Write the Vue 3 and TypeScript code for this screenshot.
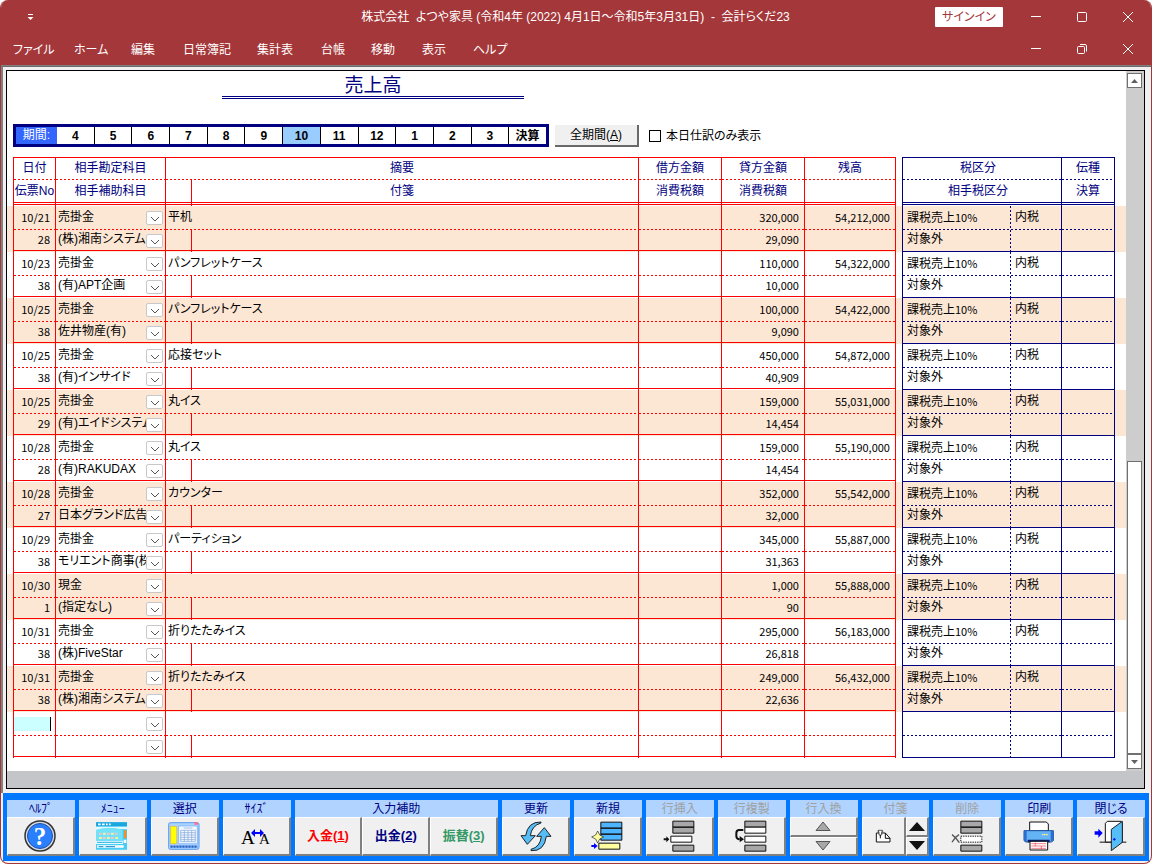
<script setup lang="ts">
import { ref } from 'vue'

interface Entry {
  date: string
  no: string
  account: string
  sub: string
  memo: string
  credit: string
  tax: string
  balance: string
}

const menus = ['ファイル', 'ホーム', '編集', '日常簿記', '集計表', '台帳', '移動', '表示', 'ヘルプ']
const months = ['4', '5', '6', '7', '8', '9', '10', '11', '12', '1', '2', '3', '決算']
const month = ref('10')
const todayOnly = ref(false)
const newDate = ref('')

const raw: string[][] = [
  ['10/21', '28', '売掛金', '(株)湘南システム', '平机', '320,000', '29,090', '54,212,000'],
  ['10/23', '38', '売掛金', '(有)APT企画', 'パンフレットケース', '110,000', '10,000', '54,322,000'],
  ['10/25', '38', '売掛金', '佐井物産(有)', 'パンフレットケース', '100,000', '9,090', '54,422,000'],
  ['10/25', '38', '売掛金', '(有)インサイド', '応接セット', '450,000', '40,909', '54,872,000'],
  ['10/25', '29', '売掛金', '(有)エイドシステム', '丸イス', '159,000', '14,454', '55,031,000'],
  ['10/28', '28', '売掛金', '(有)RAKUDAX', '丸イス', '159,000', '14,454', '55,190,000'],
  ['10/28', '27', '売掛金', '日本グランド広告', 'カウンター', '352,000', '32,000', '55,542,000'],
  ['10/29', '38', '売掛金', 'モリエント商事(株)', 'パーティション', '345,000', '31,363', '55,887,000'],
  ['10/30', '1', '現金', '(指定なし)', '', '1,000', '90', '55,888,000'],
  ['10/31', '38', '売掛金', '(株)FiveStar', '折りたたみイス', '295,000', '26,818', '56,183,000'],
  ['10/31', '38', '売掛金', '(株)湘南システム', '折りたたみイス', '249,000', '22,636', '56,432,000'],
  ['', '', '', '', '', '', '', ''],
]
const entries: Entry[] = raw.map(([date, no, account, sub, memo, credit, tax, balance]) => ({
  date, no, account, sub, memo, credit, tax, balance,
}))
</script>

<template>
  <div class="window">
    <header class="caption">
      <div class="title-row">
        <button class="quick" aria-label="クイックアクセス">
          <svg width="7" height="8" viewBox="0 0 7 8"><path d="M1 1.5h5" stroke="#fff" /><path d="M0.5 4h6l-3 3z" fill="#fff" /></svg>
        </button>
        <h1>株式会社&nbsp; よつや家具 (令和4年 (2022) 4月1日～令和5年3月31日)&nbsp; -&nbsp; 会計らくだ23</h1>
        <button class="signin">サインイン</button>
        <div class="controls">
          <button aria-label="最小化"><svg width="12" height="12"><path d="M1 5.5h10" stroke="#fff" /></svg></button>
          <button aria-label="最大化"><svg width="12" height="12"><rect x="1.5" y="1.5" width="9" height="9" rx="1" fill="none" stroke="#fff" /></svg></button>
          <button aria-label="閉じる"><svg width="12" height="12"><path d="M1 1l10 10M11 1L1 11" stroke="#fff" /></svg></button>
        </div>
      </div>
      <div class="menu-row">
        <nav>
          <button v-for="m in menus" :key="m">{{ m }}</button>
        </nav>
        <div class="controls">
          <button aria-label="文書を最小化"><svg width="12" height="12"><path d="M1 5.5h10" stroke="#fff" /></svg></button>
          <button aria-label="文書を元に戻す">
            <svg width="12" height="12"><rect x="1.5" y="3.5" width="7" height="7" rx="1" fill="none" stroke="#fff" /><path d="M4 1.5h5q1.500 0 1.500 1.500v5.500" fill="none" stroke="#fff" /></svg>
          </button>
          <button aria-label="文書を閉じる"><svg width="12" height="12"><path d="M1 1l10 10M11 1L1 11" stroke="#fff" /></svg></button>
        </div>
      </div>
    </header>

    <main class="client">
      <div class="frame">
        <div class="pane">
          <div class="sheet">
            <h2>売上高</h2>
            <div class="filters">
              <div class="period">
                <span class="period-label">期間:</span>
                <button v-for="m in months" :key="m" :class="{ on: month === m }" @click="month = m">{{ m }}</button>
              </div>
              <button class="all">全期間(<u>A</u>)</button>
              <label class="today"><input v-model="todayOnly" type="checkbox" />本日仕訳のみ表示</label>
            </div>

            <div class="ledgers">
              <table class="ledger red">
                <colgroup>
                  <col class="c-date" /><col class="c-acct" /><col class="c-tag" /><col /><col class="c-amt" /><col class="c-amt" /><col class="c-bal" />
                </colgroup>
                <thead>
                  <tr class="top">
                    <th>日付</th><th>相手勘定科目</th><th colspan="2">摘要</th><th>借方金額</th><th>貸方金額</th><th>残高</th>
                  </tr>
                  <tr class="bottom">
                    <th>伝票No</th><th>相手補助科目</th><th></th><th class="memo-head">付箋</th><th>消費税額</th><th>消費税額</th><th></th>
                  </tr>
                </thead>
                <tbody v-for="(e, i) in entries" :key="i">
                  <tr class="top">
                    <td v-if="e.date" class="num">{{ e.date }}</td>
                    <td v-else class="entry"><input v-model="newDate" aria-label="日付" /></td>
                    <td class="pick">
                      <div class="combo">
                        <select aria-label="相手勘定科目"><option>{{ e.account }}</option></select>
                        <span class="arrow"><svg width="10" height="6" viewBox="0 0 10 6"><path d="M1 1l4 4 4-4" fill="none" stroke="#555" /></svg></span>
                      </div>
                    </td>
                    <td colspan="2" class="memo">{{ e.memo }}</td>
                    <td class="num"></td>
                    <td class="num">{{ e.credit }}</td>
                    <td class="num">{{ e.balance }}</td>
                  </tr>
                  <tr class="bottom">
                    <td class="num">{{ e.no }}</td>
                    <td class="pick">
                      <div class="combo">
                        <select aria-label="相手補助科目"><option>{{ e.sub }}</option></select>
                        <span class="arrow"><svg width="10" height="6" viewBox="0 0 10 6"><path d="M1 1l4 4 4-4" fill="none" stroke="#555" /></svg></span>
                      </div>
                    </td>
                    <td></td>
                    <td></td>
                    <td class="num"></td>
                    <td class="num">{{ e.tax }}</td>
                    <td class="num"></td>
                  </tr>
                </tbody>
              </table>

              <table class="ledger navy">
                <colgroup><col class="c-kind" /><col class="c-in" /><col class="c-end" /></colgroup>
                <thead>
                  <tr class="top"><th colspan="2" class="kind-head">税区分</th><th>伝種</th></tr>
                  <tr class="bottom"><th colspan="2" class="kind-head">相手税区分</th><th>決算</th></tr>
                </thead>
                <tbody v-for="(e, i) in entries" :key="i">
                  <tr class="top">
                    <td class="kind"><template v-if="e.date">課税売上<span class="rate">10%</span></template></td>
                    <td class="in">{{ e.date ? '内税' : '' }}</td>
                    <td></td>
                  </tr>
                  <tr class="bottom">
                    <td class="kind">{{ e.date ? '対象外' : '' }}</td>
                    <td class="in"></td>
                    <td></td>
                  </tr>
                </tbody>
              </table>
            </div>
          </div>
          <div class="scroll">
            <button aria-label="上へ"><svg width="7" height="4"><path d="M0 4L3.500 0 7 4z" fill="#606060" /></svg></button>
            <div class="track"><div class="thumb"></div></div>
            <button aria-label="下へ"><svg width="7" height="4"><path d="M0 0h7L3.500 4z" fill="#606060" /></svg></button>
          </div>
        </div>
        <div class="strip"></div>
      </div>
    </main>

    <footer class="tools">
      <section>
        <h3 class="half">ﾍﾙﾌﾟ</h3>
        <div class="keys"><button aria-label="ヘルプ">
          <svg width="32" height="32" viewBox="0 0 32 32">
            <circle cx="16" cy="16" r="15" fill="#d8dce4" stroke="#333" stroke-width="1.500" />
            <circle cx="16" cy="16" r="12.500" fill="#2a7fff" stroke="#1c50a8" />
            <text x="16" y="25" text-anchor="middle" class="q">?</text>
          </svg>
        </button></div>
      </section>
      <section>
        <h3 class="half">ﾒﾆｭｰ</h3>
        <div class="keys"><button aria-label="メニュー">
          <svg width="32" height="28" viewBox="291 97 96 84">
            <path d="M291 98h93v82h-93z" fill="#45cdf5" />
            <path d="M291 98h93v12h-93z" fill="#1ba6e0" />
            <path d="M297 104h8M309 104h8M321 104h5M330 104h5" stroke="#fff" stroke-width="5" />
            <path d="M291 111h93v8q-40-4-60 0t-33 6z" fill="#e4f9ff" />
            <path d="M291 120q40-12 80 0v32h-80z" fill="#73e1f8" />
            <path d="M300 132h8M324 132h8M347 132h8M312 145h8M336 145h8" stroke="#ffc1c8" stroke-width="6" />
            <path d="M312 132h8M336 132h8M300 145h8M324 145h8M349 145h8" stroke="#eef79b" stroke-width="6" />
            <path d="M291 153h81v10h-81z" fill="#e8fbff" />
            <path d="M294 158h76" stroke="#26b4df" stroke-width="3" />
            <path d="M375 122h7v24h-7z" fill="#ff8a1c" />
            <path d="M374 150h8v10h-8zM294 167h80v7h-80z" fill="#fff" />
            <path d="M299 171h14M320 171h28" stroke="#1488c8" stroke-width="3" />
          </svg>
        </button></div>
      </section>
      <section>
        <h3>選択</h3>
        <div class="keys"><button aria-label="選択">
          <svg width="32" height="28" viewBox="503 95 96 84">
            <rect x="505" y="97" width="91" height="80" rx="5" fill="#a9d3ff" stroke="#5b9bf0" stroke-width="3" />
            <path d="M582 96h11v7h-11z" fill="#ff6f8f" />
            <path d="M511 108h18v52h-18z" fill="#ff0" stroke="#e9ad43" stroke-width="2" />
            <path d="M535 107h56v53h-56z" fill="#f4f9ff" stroke="#6aaaf2" stroke-width="2" />
            <path d="M541 120h44v34h-44zM541 127h44M541 134h44M541 141h44M541 148h44M552 120v34M563 120v34M574 120v34M550 113h26" fill="none" stroke="#7ba5d6" stroke-width="2" />
            <path d="M507 164h87v9h-87z" fill="#a9d3ff" />
            <path d="M510 169h82" stroke="#2a62c4" stroke-width="7" stroke-dasharray="7 2" />
          </svg>
        </button></div>
      </section>
      <section>
        <h3 class="half">ｻｲｽﾞ</h3>
        <div class="keys"><button aria-label="サイズ">
          <svg width="30" height="24" viewBox="0 0 30 24">
            <text x="0" y="20" class="big-a">A</text><text x="18" y="20" class="small-a">A</text>
            <path d="M10 9l4-4v3h5V5l4 4-4 4v-3h-5v3z" fill="#00f" />
          </svg>
        </button></div>
      </section>
      <section class="triple">
        <h3>入力補助</h3>
        <div class="keys">
          <button class="word in-cash"><span>入金(<u>1</u>)</span></button>
          <button class="word out-cash"><span>出金(<u>2</u>)</span></button>
          <button class="word swap"><span>振替(<u>3</u>)</span></button>
        </div>
      </section>
      <section>
        <h3>更新</h3>
        <div class="keys"><button aria-label="更新">
          <svg width="32" height="31" viewBox="689 90 96 93">
            <path d="M752 93Q712 92 706 134L692 134 711 160 735 134 720 134Q724 104 752 96z" fill="#55bdf8" stroke="#222" stroke-width="3" stroke-linejoin="round" />
            <path d="M722 179Q762 182 768 136L782 136 762 110 739 136 753 136Q750 168 722 175z" fill="#55bdf8" stroke="#222" stroke-width="3" stroke-linejoin="round" />
          </svg>
        </button></div>
      </section>
      <section>
        <h3>新規</h3>
        <div class="keys"><button aria-label="新規">
          <svg width="32" height="30" viewBox="65 88 96 90">
            <path d="M94.500 91.500h63v18h-63zM94.500 109.500h63v18h-63zM94.500 127.500h63v18h-63z" fill="#4db5ff" stroke="#111" stroke-width="3" />
            <path d="M88.500 154.500h63v18h-63z" fill="#ffffa0" stroke="#111" stroke-width="3" />
            <path d="M85 118l6 12 12 6-12 6-6 12-6-12-12-6 12-6z" fill="#ffffa0" stroke="#222" stroke-width="2" />
            <path d="M66 160h8v-6l11 9-11 9v-6h-8z" fill="#00f" />
          </svg>
        </button></div>
      </section>
      <section class="off">
        <h3>行挿入</h3>
        <div class="keys"><button aria-label="行挿入">
          <svg width="32" height="32" viewBox="281 88 96 96">
            <path d="M310.500 91.500h63v18h-63zM310.500 109.500h63v18h-63zM310.500 163.500h63v18h-63z" fill="#a8a8a8" stroke="#111" stroke-width="3" />
            <path d="M304.500 136.500h63v18h-63z" fill="#fff" stroke="#111" stroke-width="3" />
            <path d="M283 143h8v-6l9 9-9 9v-6h-8z" fill="#111" />
          </svg>
        </button></div>
      </section>
      <section class="off">
        <h3>行複製</h3>
        <div class="keys"><button aria-label="行複製">
          <svg width="32" height="32" viewBox="497 88 96 96">
            <path d="M526.500 91.500h63v18h-63zM526.500 163.500h63v18h-63z" fill="#a8a8a8" stroke="#111" stroke-width="3" />
            <path d="M526.500 109.500h63v18h-63zM526.500 136.500h63v18h-63z" fill="#fff" stroke="#111" stroke-width="3" />
            <path d="M522 118h-14q-7 1-7 10v8q0 9 10 10" fill="none" stroke="#111" stroke-width="6" />
            <path d="M511 136l13 10-13 9z" fill="#111" />
          </svg>
        </button></div>
      </section>
      <section class="off">
        <h3>行入換</h3>
        <div class="keys stack">
          <button aria-label="上と入換"><svg width="16" height="10"><path d="M1 9.500h14L8 1z" fill="#a8a8a8" stroke="#555" /></svg></button>
          <button aria-label="下と入換"><svg width="16" height="10"><path d="M1 .5h14L8 9z" fill="#a8a8a8" stroke="#555" /></svg></button>
        </div>
      </section>
      <section class="off">
        <h3>付箋</h3>
        <div class="keys">
          <button class="tag" aria-label="付箋">
            <svg width="16" height="14" viewBox="46 113 48 42">
              <path d="M50 125h27l14 16v11H50z" fill="#fff" stroke="#111" stroke-width="3" />
              <path d="M77 125v16h14" fill="none" stroke="#111" stroke-width="3" />
              <path d="M55 117h14v4h-3v10h-8v-10h-3z" fill="#fff" stroke="#111" stroke-width="2" />
              <path d="M62 131v10" fill="none" stroke="#111" stroke-width="3" />
            </svg>
          </button>
          <div class="stack spin">
            <button aria-label="前の付箋"><svg width="16" height="10"><path d="M0 10h16L8 1z" fill="#111" /></svg></button>
            <button aria-label="次の付箋"><svg width="16" height="10"><path d="M0 0h16L8 9z" fill="#111" /></svg></button>
          </div>
        </div>
      </section>
      <section class="off">
        <h3>削除</h3>
        <div class="keys"><button aria-label="削除">
          <svg width="32" height="32" viewBox="272 88 96 96">
            <path d="M301.500 91.500h63v18h-63zM301.500 109.500h63v18h-63zM301.500 163.500h63v18h-63z" fill="#a8a8a8" stroke="#111" stroke-width="3" />
            <path d="M301.500 136.500h63v18h-63z" fill="#fff" stroke="#111" stroke-width="3" stroke-dasharray="4 3" />
            <path d="M275 132q12 8 22 24M296 132q-14 8-21 23" fill="none" stroke="#555" stroke-width="4" />
          </svg>
        </button></div>
      </section>
      <section>
        <h3>印刷</h3>
        <div class="keys"><button aria-label="印刷">
          <svg width="32" height="30" viewBox="488 92 96 90">
            <path d="M508 122V95h50l6 6v21z" fill="#fff" stroke="#111" stroke-width="3" />
            <path d="M491 121h88v30l-6 4h-76l-6-4z" fill="#64b4f5" stroke="#1a4f9f" stroke-width="3" />
            <path d="M491 121h8v33l-8-4zM571 121h8v29l-8 4z" fill="#2c6ed0" />
            <path d="M502 148h66v8h-66z" fill="#0a1d6e" />
            <path d="M509 153h53v26h-53z" fill="#fff" stroke="#111" stroke-width="3" />
            <path d="M513 160h44M513 167h44M513 174h44M525 157v10M543 167v10" stroke="#f04050" stroke-width="2" />
            <path d="M545 133h17" stroke="#ffe98a" stroke-width="4" stroke-dasharray="5 1" />
          </svg>
        </button></div>
      </section>
      <section>
        <h3>閉じる</h3>
        <div class="keys"><button aria-label="終了">
          <svg width="33" height="32" viewBox="703 88 99 96">
            <path d="M720 154.500h80" stroke="#111" stroke-width="3" />
            <path d="M737 154V98l6-6h42l3 4v58z" fill="#fff" stroke="#111" stroke-width="3" />
            <path d="M755 180v-64l33-24v63z" fill="#55bdf8" stroke="#222" stroke-width="3" stroke-linejoin="round" />
            <path d="M760 146h8M764 142v8" stroke="#00f" stroke-width="3" />
            <path d="M705 122h11v-8l13 13-13 14v-9h-11z" fill="#00f" />
          </svg>
        </button></div>
      </section>
    </footer>
  </div>
</template>

<style>
html,
body,
#app {
  height: 100%;
}
body {
  margin: 0;
  background: #fff;
}
</style>

<style scoped>
* {
  box-sizing: border-box;
}
.window {
  --red: #ff0000;
  --navy: #000080;
  display: flex;
  flex-direction: column;
  min-height: 100%;
  border: 1px solid #a4373a;
  border-top: 0;
  border-radius: 8px;
  overflow: hidden;
  background: #f0f0f0;
  font-family: "Liberation Sans", "Noto Sans CJK JP", sans-serif;
  font-size: 12px;
  line-height: 16px;
  color: #000;
  font-feature-settings: "palt";
}
button,
input,
select {
  font: inherit;
  font-feature-settings: inherit;
  color: inherit;
  margin: 0;
  padding: 0;
  border: 0;
  background: none;
}
svg {
  display: block;
}
h1,
h2,
h3 {
  margin: 0;
  font-weight: 400;
}

/* caption */
.caption {
  background: #a4373a;
  color: #fff;
  border-bottom: 1px solid #808080;
}
.title-row,
.menu-row {
  display: flex;
  align-items: center;
}
.title-row {
  height: 33px;
}
.menu-row {
  height: 32px;
  padding-left: 12px;
}
.quick {
  margin-left: 26px;
  margin-right: 26px;
}
h1 {
  flex: 1;
  text-align: center;
  font-size: 12px;
  padding-left: 236px;
  white-space: nowrap;
}
.signin {
  width: 68px;
  height: 20px;
  margin-left: 80px;
  background: #fff;
  color: #a4373a;
  border-radius: 1px;
}
.controls {
  display: flex;
  justify-content: flex-end;
  width: 148px;
}
.controls button {
  width: 46px;
  display: flex;
  justify-content: center;
  padding: 6px 0;
}
nav {
  flex: 1;
  display: grid;
  grid-template-columns: 61px 57px 52px 74px 64px 50px 51px 51px auto;
  padding-top: 2px;
}
nav button {
  text-align: left;
}

/* sheet */
.client {
  flex: 1;
  display: flex;
  border-top: 1px solid #6c6c6c;
  border-left: 2px solid #808080;
  padding: 3px 6px 4px 3px;
}
.frame {
  flex: 1;
  display: flex;
  flex-direction: column;
  border: 1px solid #000;
  background: #fff;
}
.pane {
  flex: 1;
  display: flex;
}
.sheet {
  flex: 1;
  min-width: 0;
}
h2 {
  width: 302px;
  height: 28px;
  margin-left: 215px;
  border-bottom: 3px double var(--navy);
  color: var(--navy);
  font-size: 19px;
  line-height: 29px;
  text-align: center;
}
.filters {
  display: flex;
  align-items: center;
  padding: 25px 0 10px 6px;
}
.period {
  display: flex;
  width: 536px;
  height: 23px;
  border: 3px solid var(--navy);
}
.period-label {
  width: 41px;
  background: #3366ff;
  color: #fff;
  text-align: center;
}
.period button {
  flex: 1;
  font-weight: 700;
  border-left: 1px solid #000;
  line-height: 16px;
}
.period-label + button {
  border-left: 0;
}
.period .on {
  background: #99ccff;
}
.all {
  width: 84px;
  height: 22px;
  margin-left: 6px;
  background: #f0f0f0;
  border: solid #696969;
  border-width: 0 2px 2px 0;
}
.today {
  display: flex;
  align-items: center;
  gap: 5px;
  margin-left: 10px;
}
.today input {
  appearance: none;
  width: 12px;
  height: 12px;
  border: 1px solid #000;
  background: #fff;
}
.today input:checked {
  background: #000;
}

/* ledgers */
.ledgers {
  display: flex;
  gap: 6px;
  padding: 0 11px 13px 6px;
  background: repeating-linear-gradient(#fce6d4 0 46px, #fff 46px 92px) 0 49px / 100% 506px no-repeat;
}
.ledger {
  --line: var(--red);
  table-layout: fixed;
  border-spacing: 0;
  border-left: 1px solid var(--line);
  width: 213px;
}
.red {
  flex: 1;
  width: auto;
  min-width: 0;
}
.navy {
  --line: var(--navy);
}
.c-date { width: 42px; }
.c-acct { width: 110px; }
.c-tag { width: 26px; }
.c-amt { width: 83px; }
.c-bal { width: 91px; }
.c-kind { width: 108px; }
.c-in { width: 51px; }
.c-end { width: 53px; }
th,
td {
  padding: 0;
  font-weight: 400;
  white-space: nowrap;
  overflow: hidden;
  border-right: 1px solid var(--line);
  background-repeat: no-repeat;
  background-origin: border-box;
}
.top > * {
  height: 24px;
  line-height: 22px;
  vertical-align: top;
  background-image: repeating-linear-gradient(90deg, var(--line) 0 2px, transparent 2px 4px);
  background-size: 100% 1px;
  background-position: 0 100%;
}
.bottom > * {
  height: 22px;
  line-height: 18px;
  vertical-align: top;
  background-image: linear-gradient(var(--line), var(--line));
  background-size: 100% 1px;
  background-position: 0 20px;
}
.navy tbody .bottom > * {
  background-position: 0 100%;
}
th {
  color: var(--navy);
  text-align: center;
}
thead .top > * {
  height: 23px;
  line-height: 20px;
  border-top: 1px solid var(--line);
}
thead .bottom > * {
  height: 26px;
  line-height: 22px;
  background-image: linear-gradient(var(--line), var(--line)), linear-gradient(var(--line), var(--line));
  background-position: 0 22px, 0 24px;
}
.memo-head {
  padding-right: 26px;
}
.kind-head {
  padding-right: 8px;
}
.num {
  text-align: right;
  padding-right: 5px;
}
.num,
.rate {
  font-family: "Noto Sans CJK JP", sans-serif;
  font-size: 11px;
}
.memo {
  padding-left: 2px;
}
.navy td {
  padding-left: 4px;
}
.navy .kind {
  border-right: 0;
  background-image: repeating-linear-gradient(90deg, var(--line) 0 2px, transparent 2px 4px), repeating-linear-gradient(var(--line) 0 2px, transparent 2px 4px);
  background-size: 100% 1px, 1px 100%;
  background-position: 0 100%, 100% 0;
}
.navy .bottom .kind {
  background-image: linear-gradient(var(--line), var(--line)), repeating-linear-gradient(var(--line) 0 2px, transparent 2px 4px);
  background-position: 0 100%, 100% 0;
}
.entry input {
  display: block;
  width: 37px;
  height: 14px;
  margin-top: 5px;
  background: #ccffff;
  border-right: 1px solid #000;
  outline: 0;
}
.combo {
  position: relative;
}
.combo select {
  appearance: none;
  display: block;
  width: 100%;
  height: 22px;
  padding: 0 19px 0 2px;
  overflow: hidden;
}
.bottom .combo select {
  height: 18px;
}
.arrow {
  position: absolute;
  top: 5px;
  right: 2px;
  width: 17px;
  height: 14px;
  display: grid;
  place-items: end center;
  padding-bottom: 2px;
  border: 1px solid #c8c8c8;
  border-radius: 2px;
  background: #fff;
  pointer-events: none;
}
.bottom .arrow {
  top: 4px;
}

/* scroll bar */
.scroll {
  width: 18px;
  display: flex;
  flex-direction: column;
  padding: 2px 2px 2px 1px;
  background: #cdcdcd;
}
.scroll button {
  height: 15px;
  display: grid;
  place-items: center;
  border: 1px solid #707070;
  background: #fff;
}
.track {
  flex: 1;
  display: flex;
  flex-direction: column;
  justify-content: flex-end;
}
.thumb {
  height: 44%;
  border: 1px solid #707070;
  background: #fff;
}
.strip {
  height: 17px;
  background: #c4c5c9;
}

/* tool bar */
.tools {
  display: flex;
  gap: 4px;
  margin: 0 2px 2px;
  padding: 7px 4px 5px;
  background: #0078ff;
}
.tools section {
  flex: 1 1 68px;
  min-width: 0;
}
.tools .triple {
  flex: 3 1 204px;
}
.tools h3 {
  height: 17px;
  line-height: 18px;
  background: #b0d4ff;
  color: var(--navy);
  font-size: 12px;
  text-align: center;
}
.tools .half {
  font-feature-settings: normal;
}
.tools .off h3 {
  color: #a0a0a0;
}
.keys {
  display: flex;
  height: 39px;
}
.keys button {
  flex: 1;
  display: grid;
  place-items: center;
  min-height: 0;
  background: #f0f0f0;
  border: solid #fff;
  border-width: 1px 2px 2px 1px;
  border-right-color: #808080;
  border-bottom-color: #808080;
}
.keys.stack,
.stack {
  display: flex;
  flex-direction: column;
}
.spin {
  width: 23px;
}
.word {
  font-size: 13px;
  font-weight: 700;
}
.in-cash { color: #ff0000; }
.out-cash { color: #000080; }
.swap { color: #339966; }
.q {
  font: 700 25px "Liberation Serif", serif;
  fill: #fff;
}
.big-a {
  font: 400 19px "Liberation Serif", serif;
}
.small-a {
  font: 400 15px "Liberation Serif", serif;
}
</style>
